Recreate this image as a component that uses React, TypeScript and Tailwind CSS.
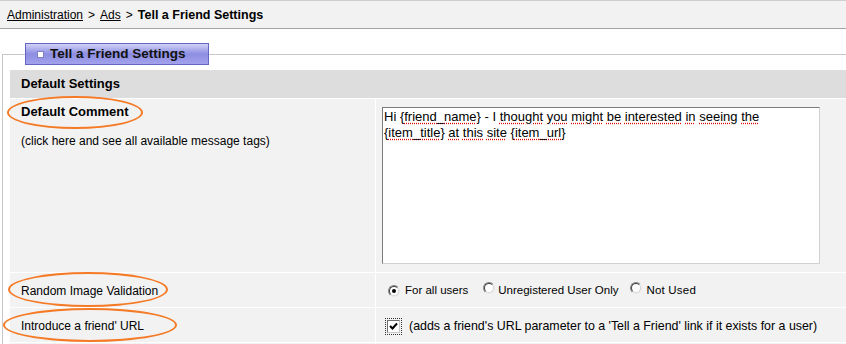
import React from "react";

const F = { fontFamily: '"Liberation Sans", Arial, sans-serif' };

function Ellipse({ className }: { className: string }) {
  return (
    <div
      className={`pointer-events-none absolute rounded-[50%] border-2 border-[#f57a26] ${className}`}
    />
  );
}

function Radio({ checked }: { checked?: boolean }) {
  return (
    <span className="relative inline-flex h-[12px] w-[12px] shrink-0 items-center justify-center rounded-full border border-t-[#808080] border-l-[#808080] border-r-[#e8e8e8] border-b-[#e8e8e8] bg-white">
      <span className="absolute inset-0 rounded-full border border-t-[#404040] border-l-[#404040] border-r-[#d4d4d4] border-b-[#d4d4d4]" />
      {checked && <span className="h-[4px] w-[4px] rounded-full bg-black" />}
    </span>
  );
}

const U = ({ children }: { children: React.ReactNode }) => (
  <span className="underline decoration-dotted decoration-[#e00000] underline-offset-2">{children}</span>
);

export default function App() {
  return (
    <div className="w-[846px] h-[344px] overflow-hidden bg-white text-black" style={F}>
      {/* breadcrumb bar */}
      <div className="flex h-[29px] items-center border-t border-b border-t-[#cfcfcf] border-b-[#a3a3a3] bg-[#f2f2f2] px-[7px] pt-[1px] text-[12px]">
        <span className="underline">Administration</span>
        <span className="mx-[5px]">&gt;</span>
        <span className="underline">Ads</span>
        <span className="mx-[5px]">&gt;</span>
        <span className="text-[12.5px] font-bold">Tell a Friend Settings</span>
      </div>

      <fieldset className="ml-[2px] mt-[14px] border-l border-t border-[#c8c8c8] pl-[7px] pt-[5px]">
        <legend className="ml-[15px] flex h-[22px] w-[184px] items-center border border-[#6565c4] bg-gradient-to-b from-[#d2d2f6] via-[#8d8de2] to-[#a2a2ec] pl-[11px]">
          <span className="mr-[6px] h-[7px] w-[7px] border border-[#8080c0] bg-white" />
          <span className="text-[13.5px] font-bold text-[#111]">Tell a Friend Settings</span>
        </legend>

        <div className="grid grid-cols-[365px_1fr] gap-px bg-white">
          <div className="col-span-2 flex h-[28px] items-center bg-[#dddddd] pl-[11px] text-[13px] font-bold">
            Default Settings
          </div>

          {/* row 1 */}
          <div className="relative h-[173px] bg-[#f2f2f2] pl-[11px] pt-[5px]">
            <Ellipse className="-left-[3px] -top-[3px] h-[33px] w-[136px]" />
            <div className="text-[13px] font-bold leading-[16px]">Default Comment</div>
            <div className="mt-[13px] text-[12px] leading-[16px]">
              (click here and see all available message tags)
            </div>
          </div>
          <div className="bg-[#f2f2f2] pl-[6px] pt-[8px]">
            <div className="h-[157px] w-[438px] border border-t-[#7c7c7c] border-l-[#7c7c7c] border-r-[#d0d0d0] border-b-[#d0d0d0] bg-white pl-[1px] pt-[1px] text-[13px] leading-[16px]">
              <div className="whitespace-nowrap">
                Hi {"{"}<U>friend_name</U>{"}"} - I <U>thought</U> <U>you</U> <U>might</U> <U>be</U>{" "}
                <U>interested</U> <U>in</U> <U>seeing</U> <U>the</U>
              </div>
              <div className="whitespace-nowrap">
                {"{"}<U>item_title</U>{"}"} <U>at</U> <U>this</U> <U>site</U> {"{"}<U>item_url</U>{"}"}
              </div>
            </div>
          </div>

          {/* row 2 */}
          <div className="relative flex h-[34px] items-center bg-[#f2f2f2] pl-[11px] text-[12px]">
            <Ellipse className="-left-[2px] -top-[1px] h-[35px] w-[160px]" />
            <span className="mt-[2px]">Random Image Validation</span>
          </div>
          <div className="flex items-center bg-[#f2f2f2] pl-[12px] pt-[2px] text-[11.5px]">
            <Radio checked />
            <span className="ml-[5px]">For all users</span>
            <span className="ml-[15px]">
              <Radio />
            </span>
            <span className="ml-[3px]">Unregistered User Only</span>
            <span className="ml-[12px]">
              <Radio />
            </span>
            <span className="ml-[4px] tracking-[0.2px]">Not Used</span>
          </div>

          {/* row 3 */}
          <div className="relative flex h-[34px] items-center bg-[#f2f2f2] pl-[11px] text-[12px]">
            <Ellipse className="-left-[7px] top-0 h-[34px] w-[174px]" />
            <span className="mt-[2px]">Introduce a friend' URL</span>
          </div>
          <div className="flex items-center bg-[#f2f2f2] pl-[11px] pt-[2px] text-[12.4px]">
            <span className="flex h-[13px] w-[13px] items-center justify-center border border-t-[#6f6f6f] border-l-[#6f6f6f] border-r-[#c8c8c8] border-b-[#c8c8c8] bg-white outline-1 outline-dotted outline-offset-1 outline-[#333]">
              <svg width="9" height="8" viewBox="0 0 9 8">
                <path d="M1 4 L3.5 6.5 L8 1.5" fill="none" stroke="#000" strokeWidth="2" />
              </svg>
            </span>
            <span className="ml-[9px]">
              (adds a friend's URL parameter to a 'Tell a Friend' link if it exists for a user)
            </span>
          </div>

          <div className="h-[10px] bg-[#f2f2f2]" />
          <div className="h-[10px] bg-[#f2f2f2]" />
        </div>
      </fieldset>
    </div>
  );
}
